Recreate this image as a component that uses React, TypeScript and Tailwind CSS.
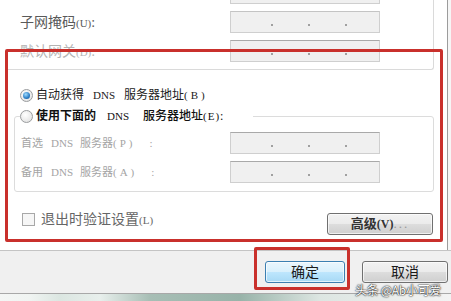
import React from "react";

const font = "font-['Liberation_Serif','Noto_Sans_CJK_SC',serif]";

const IpBox = ({ dark }: { dark?: boolean }) => {
    return (
        <div
            className={`w-[150px] h-[22px] bg-[#f0f0f0] border border-[#cfcfcf] ${
                dark ? "border-t-[#a9a9a9]" : "border-t-[#c4c4c4]"
            } flex items-center pl-[40px] gap-[35px] pt-[5px]`}
        >
            <span className="w-[2px] h-[2px] bg-[#a0a0a0]" />
            <span className="w-[2px] h-[2px] bg-[#a0a0a0]" />
            <span className="w-[2px] h-[2px] bg-[#a0a0a0]" />
        </div>
    );
};

const Radio = ({ checked }: { checked?: boolean }) => {
    return (
        <div className="w-[13px] h-[13px] rounded-full border border-[#9a9c9e] bg-[radial-gradient(circle_at_40%_35%,#ffffff,#dcdcdc)] flex items-center justify-center shrink-0">
            {checked && (
                <div className="w-[7px] h-[7px] rounded-full bg-[radial-gradient(circle_at_40%_35%,#9fdcff,#2a7cc4_60%,#174f8a)]" />
            )}
        </div>
    );
};

const Btn = ({ label, primary, w }: { label: React.ReactNode; primary?: boolean; w: string }) => {
    return (
        <div
            className={`${w} h-[22px] rounded-[3px] border flex items-center justify-center text-[14px] text-[#1a1a1a] ${
                primary
                    ? "border-[#3c7fb1] bg-[linear-gradient(to_bottom,#eaf6fd_0%,#d9f0fc_50%,#bee6fd_51%,#a7d9f5_100%)] shadow-[inset_0_0_0_1px_#ffffffaa]"
                    : "border-[#707070] bg-[linear-gradient(to_bottom,#f2f2f2_0%,#ebebeb_50%,#dddddd_51%,#cfcfcf_100%)] shadow-[inset_0_0_0_1px_#ffffffaa]"
            }`}
        >
            {label}
        </div>
    );
};

export default function App() {
    return (
        <div className={`relative w-[451px] h-[301px] overflow-hidden bg-white ${font}`}>
            <div className="flex h-[250px]">
                <div className="w-[447px] flex flex-col">
                    {/* IP fieldset (cut off at top) */}
                    <div className="ml-[8px] w-[426px] h-[70px] border-r border-b border-[#dadada] rounded-br-[3px] flex flex-col justify-end gap-[7px] pb-[7px] overflow-hidden shrink-0">
                        <div className="flex items-center h-[22px] shrink-0">
                            <div className="w-[222px]" />
                            <IpBox />
                        </div>
                        <div className="flex items-center h-[22px] shrink-0">
                            <div className="w-[222px] pl-[12px] text-[14px] text-[#5a5a5a]">
                                子网掩码<span className="text-[11px]">(U)</span>:
                            </div>
                            <IpBox />
                        </div>
                        <div className="flex items-center h-[22px] shrink-0">
                            <div className="w-[222px] pl-[12px] text-[14px] text-[#b4b4b4]">
                                默认网关<span className="text-[11px]">(D)</span>:
                            </div>
                            <IpBox dark />
                        </div>
                    </div>

                    {/* DNS auto */}
                    <div className="mt-[17px] pl-[20px] h-[16px] flex items-center gap-[3px] text-[12px] text-[#222]">
                        <Radio checked />
                        <span className="whitespace-nowrap">
                            自动获得<span className="text-[11px] ml-[9px] mr-[9px]">DNS</span>服务器地址
                            <span className="text-[11px] tracking-[3px]">(B)</span>
                        </span>
                    </div>

                    {/* DNS manual */}
                    <fieldset className="mt-[4px] ml-[14px] w-[420px] border border-[#dcdcdc] rounded-[3px] pb-[8px]">
                        <legend className="ml-[5px] pr-[30px] h-[18px] flex items-center gap-[3px] text-[12px] text-[#111] font-medium">
                            <Radio />
                            <span className="whitespace-nowrap">
                                <span className="font-semibold">使用下面的</span>
                                <span className="text-[11px] font-normal ml-[11px] mr-[14px]">DNS</span>服务器地址
                                <span className="text-[11px] tracking-[1px]">(E)</span>:
                            </span>
                        </legend>
                        <div className="mt-[7px] flex flex-col gap-[7px]">
                            <div className="flex items-center h-[22px]">
                                <div className="w-[215px] pl-[6px] text-[11px] text-[#a4a4a4] whitespace-nowrap">
                                    首选<span className="ml-[8px] mr-[7px]">DNS</span>服务器
                                    <span className="tracking-[3px]">(P)</span>
                                    <span className="ml-[14px]">:</span>
                                </div>
                                <IpBox dark />
                            </div>
                            <div className="flex items-center h-[22px]">
                                <div className="w-[215px] pl-[6px] text-[11px] text-[#a4a4a4] whitespace-nowrap">
                                    备用<span className="ml-[8px] mr-[7px]">DNS</span>服务器
                                    <span className="tracking-[3px]">(A)</span>
                                    <span className="ml-[14px]">:</span>
                                </div>
                                <IpBox dark />
                            </div>
                        </div>
                    </fieldset>

                    {/* validate + advanced */}
                    <div className="mt-[20px] flex items-start pl-[22px] pr-[14px]">
                        <div className="flex items-center h-[14px]">
                            <div className="w-[13px] h-[13px] border border-[#a8a8a8] bg-[#f6f6f6]" />
                            <span className="ml-[6px] text-[14px] text-[#666]">
                                退出时验证设置<span className="text-[11px]">(L)</span>
                            </span>
                        </div>
                        <div className="ml-auto mt-[1px]">
                            <Btn
                                w="w-[106px]"
                                label={
                                    <span className="text-[13px] font-semibold text-[#333] whitespace-nowrap">
                                        高级<span className="text-[12px]">(V)</span>
                                        <span className="text-[#999] font-normal tracking-[2px]">...</span>
                                    </span>
                                }
                            />
                        </div>
                    </div>
                </div>
                <div className="w-px bg-[#9c9c9c]" />
                <div className="flex-1 bg-[#f6f6f6]" />
            </div>

            {/* bottom buttons bar */}
            <div className="h-px bg-[#c4c4c4]" />
            <div className="h-[42px] bg-[#f0f0f0] flex items-center">
                <div className="ml-[265px]">
                    <Btn w="w-[80px]" primary label="确定" />
                </div>
                <div className="ml-[17px]">
                    <Btn w="w-[86px]" label="取消" />
                </div>
            </div>
            <div className="h-px bg-[#a8a8a8]" />
            <div className="h-[7px] bg-[linear-gradient(to_right,#f4f6f5_0px,#f0f4f2_30px,#dbe6e1_60px,#e8efec_100px,#a7beb5_150px,#98b3a9_240px,#dde6e2_320px,#f3f3f3_451px)]" />

            {/* annotations */}
            <div className="absolute left-[5px] top-[49px] w-[438px] h-[193px] border-[3px] border-[#c9302c] rounded-[2px]" />
            <div className="absolute left-[254px] top-[247px] w-[96px] h-[43px] border-[3px] border-[#c9302c] rounded-[2px]" />

            {/* watermark */}
            <div className="absolute left-[355px] top-[282px] whitespace-nowrap text-[12px] leading-[15px] tracking-[-0.3px] text-white [text-shadow:0_0_2px_#000,0_0_1px_#000] font-['Noto_Sans_CJK_SC',sans-serif]">
                头条 @Ab小可爱
            </div>
        </div>
    );
}
